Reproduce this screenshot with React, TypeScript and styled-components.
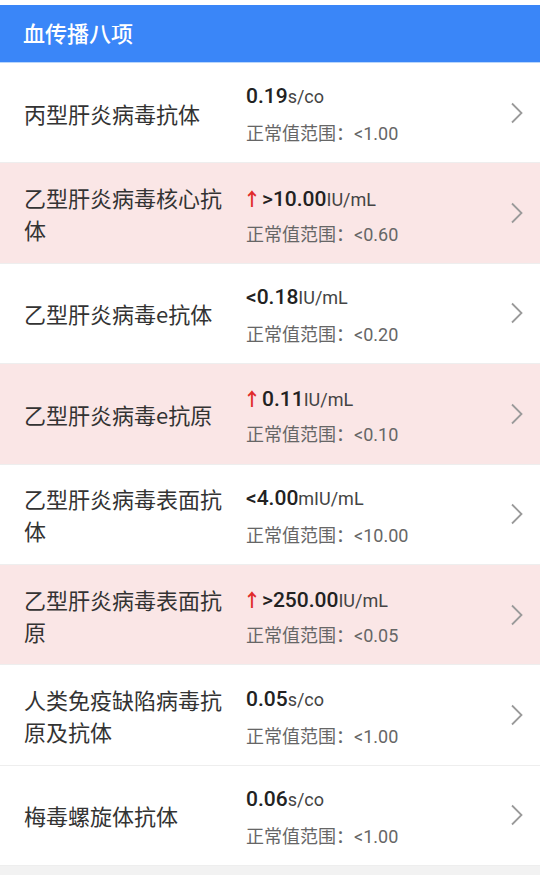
import React from 'react'
import styled, { createGlobalStyle } from 'styled-components'

const GlobalStyle = createGlobalStyle`
    html, body {
        margin: 0;
        padding: 0;
        background: #f2f2f2;
    }
    body {
        font-family: "Noto Sans CJK SC", "Noto Sans", sans-serif;
    }
`

type Item = {
    name: string;
    value: string;
    unit: string;
    range: string;
    high?: boolean;
}

const items: Item[] = [
    { name: '丙型肝炎病毒抗体', value: '0.19', unit: 's/co', range: '<1.00' },
    { name: '乙型肝炎病毒核心抗体', value: '>10.00', unit: 'IU/mL', range: '<0.60', high: true },
    { name: '乙型肝炎病毒e抗体', value: '<0.18', unit: 'IU/mL', range: '<0.20' },
    { name: '乙型肝炎病毒e抗原', value: '0.11', unit: 'IU/mL', range: '<0.10', high: true },
    { name: '乙型肝炎病毒表面抗体', value: '<4.00', unit: 'mIU/mL', range: '<10.00' },
    { name: '乙型肝炎病毒表面抗原', value: '>250.00', unit: 'IU/mL', range: '<0.05', high: true },
    { name: '人类免疫缺陷病毒抗原及抗体', value: '0.05', unit: 's/co', range: '<1.00' },
    { name: '梅毒螺旋体抗体', value: '0.06', unit: 's/co', range: '<1.00' },
]

const Page = styled.div`
    background: #fff;
    padding-top: 5px;
`
const Header = styled.div`
    height: 57px;
    background: #3a86f8;
    border-bottom: 1px solid #b9d6fb;
    display: flex;
    align-items: center;
    padding-left: 23px;
    padding-bottom: 3px;
    box-sizing: border-box;
    height: 58px;
    color: #fff;
    font-size: 22px;
    font-weight: 500;
`
const List = styled.div`
    background: #f2f2f2;
    padding-bottom: 10px;
`
const Row = styled.div<{ $high?: boolean }>`
    height: 100.4px;
    box-sizing: border-box;
    display: flex;
    align-items: center;
    padding: 0 16px 0 24px;
    background: ${({ $high }) => $high ? '#fae6e6' : '#fff'};
    border-bottom: 1px solid #eeeeee;
`
const Name = styled.div`
    width: 206px;
    margin-right: 16px;
    font-size: 22px;
    line-height: 32px;
    color: #333;
`
const Result = styled.div`
    flex: 1;
    display: flex;
    flex-direction: column;
    gap: 9px;
    padding-top: 6px;
`
const ValueLine = styled.div`
    display: flex;
    align-items: baseline;
    color: #222;
    height: 26px;
    font-family: Roboto, "Noto Sans CJK SC", sans-serif;
`
const Value = styled.span`
    font-size: 21px;
    font-weight: 500;
`
const Unit = styled.span`
    font-size: 18px;
    color: #444;
`
const Up = styled.span`
    color: #e02a2a;
    font-size: 18px;
    font-weight: 700;
    margin-right: 1px;
    margin-left: -3px;
`
const Range = styled.div`
    font-size: 18px;
    color: #666;
    line-height: 26px;

    span {
        font-family: Roboto, sans-serif;
    }
`
const Chevron = styled.svg`
    width: 14px;
    height: 22px;
    flex-shrink: 0;
`

export default function App() {
    return <Page>
        <GlobalStyle />
        <Header>血传播八项</Header>
        <List>
            {items.map((item, i) => <Row key={i} $high={item.high}>
                <Name>{item.name}</Name>
                <Result>
                    <ValueLine>
                        {item.high && <Up>↑</Up>}
                        <Value>{item.value}</Value>
                        <Unit>{item.unit}</Unit>
                    </ValueLine>
                    <Range>正常值范围：<span>{item.range}</span></Range>
                </Result>
                <Chevron viewBox='0 0 14 22'>
                    <path d='M2 1.5 L11.5 11 L2 20.5' fill='none' stroke='#9a9a9a' strokeWidth='1.8' />
                </Chevron>
            </Row>)}
        </List>
    </Page>
}
